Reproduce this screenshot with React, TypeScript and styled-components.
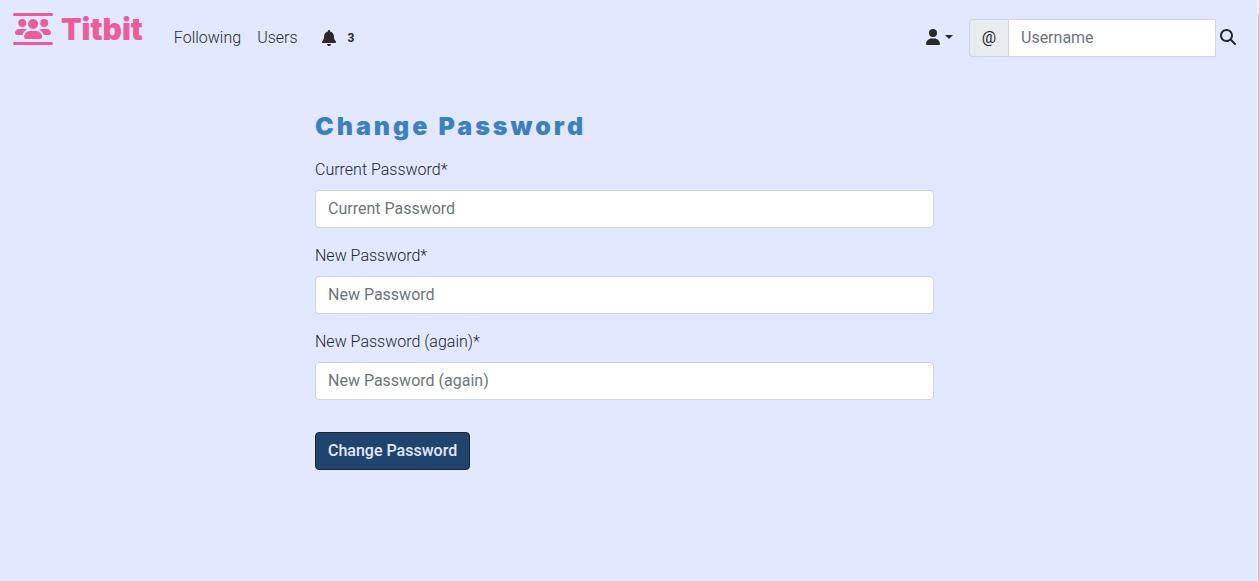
import React from "react";
import styled, { createGlobalStyle } from "styled-components";
import {
  FaBell,
  FaMagnifyingGlass,
  FaUser,
  FaUsersBetweenLines,
} from "react-icons/fa6";

const GlobalStyle = createGlobalStyle`
  *, *::before, *::after { box-sizing: border-box; }
  body {
    margin: 0;
    background: #e2e8ff;
    color: #212529;
    font-family: Roboto, "Liberation Sans", sans-serif;
    font-size: 16px;
    font-weight: 300;
    line-height: 24px;
  }
  input, button { font: inherit; }
`;

const Page = styled.div`
  min-height: 100vh;
  padding-right: 3px;
`;

const ScrollTrack = styled.div`
  position: fixed;
  top: 0;
  right: 0;
  bottom: 0;
  width: 2px;
  padding-top: 14px;
  background: #f1f1f1;
`;

const ScrollThumb = styled.div`
  width: 1px;
  height: 100%;
  margin-left: auto;
  background: #c1c1c1;
`;

const Navbar = styled.header`
  display: flex;
  align-items: center;
  justify-content: space-between;
  padding: 8px 16px 8px 13px;
`;

const NavGroup = styled.nav`
  display: flex;
  align-items: center;
`;

const Brand = styled.a`
  display: flex;
  align-items: center;
  gap: 8px;
  height: 42px;
  margin: 0 23px 18px 0;
  color: #eb5d99;
  font-family: Inter, sans-serif;
  font-size: 30px;
  font-weight: 900;
  line-height: 40px;
  text-decoration: none;
`;

const NavLink = styled.a`
  display: flex;
  align-items: center;
  padding: 8px;
  color: #292929;
  text-decoration: none;
`;

const Notifications = styled(NavLink)`
  gap: 11px;
  margin-left: 7px;
`;

const Count = styled.span`
  font-size: 12px;
  font-weight: 700;
`;

const Tools = styled.div`
  display: flex;
  align-items: center;
`;

const AccountButton = styled.button`
  display: flex;
  align-items: center;
  gap: 4px;
  margin-right: 16px;
  padding: 6px 0 8px;
  border: 0;
  background: none;
  color: #292929;
`;

const Caret = styled.span`
  border-top: 4px solid;
  border-left: 4px solid transparent;
  border-right: 4px solid transparent;
`;

const Search = styled.form`
  display: flex;
  align-items: center;
`;

const Addon = styled.label`
  display: flex;
  align-items: center;
  height: 38px;
  padding: 0 12px;
  border: 1px solid #ced4da;
  border-right: 0;
  border-radius: 4px 0 0 4px;
  background: #e9ecef;
  font-weight: 400;
`;

const Input = styled.input`
  display: block;
  width: 100%;
  height: 38px;
  padding: 5px 12px 7px;
  border: 1px solid #ced4da;
  border-radius: 4px;
  background: #fff;
  color: #495057;
  font-weight: 400;
  &::placeholder { color: #6c757d; opacity: 1; }
`;

const SearchInput = styled(Input)`
  width: 208px;
  border-radius: 0;
`;

const SearchButton = styled.button`
  display: flex;
  padding: 4px 4px 6px;
  border: 0;
  background: none;
  color: #292929;
`;

const Main = styled.main`
  width: 50%;
  margin: 32px auto 0;
  padding: 0 8px 0 1px;
`;

const Title = styled.h1`
  margin: 0 0 14px;
  color: #3d80c0;
  font-family: Inter, sans-serif;
  font-size: 25px;
  font-weight: 900;
  letter-spacing: 3px;
  line-height: 36px;
`;

const Field = styled.div`
  margin-bottom: 16px;
`;

const Label = styled.label`
  display: block;
  margin-bottom: 8px;
`;

const Submit = styled.button`
  height: 38px;
  margin-top: 16px;
  padding: 0 12px;
  border: 1px solid #212529;
  border-radius: 4px;
  background: #20446e;
  color: #e2e8ff;
  font-weight: 500;
`;

const fields = [
  { id: "current", name: "Current Password" },
  { id: "new", name: "New Password" },
  { id: "again", name: "New Password (again)" },
];

export default function App() {
  return (
    <Page>
      <GlobalStyle />
      <Navbar>
        <NavGroup>
          <Brand href="#">
            <FaUsersBetweenLines size={40} />
            Titbit
          </Brand>
          <NavLink href="#">Following</NavLink>
          <NavLink href="#">Users</NavLink>
          <Notifications href="#" aria-label="Notifications">
            <FaBell size={16} />
            <Count>3</Count>
          </Notifications>
        </NavGroup>
        <Tools>
          <AccountButton type="button" aria-label="Account">
            <FaUser size={16} />
            <Caret />
          </AccountButton>
          <Search>
            <Addon htmlFor="username">@</Addon>
            <SearchInput id="username" type="text" placeholder="Username" />
            <SearchButton type="button" aria-label="Search">
              <FaMagnifyingGlass size={16} />
            </SearchButton>
          </Search>
        </Tools>
      </Navbar>
      <Main>
        <Title>Change Password</Title>
        <form>
          {fields.map(({ id, name }) => (
            <Field key={id}>
              <Label htmlFor={id}>{name}*</Label>
              <Input id={id} type="password" placeholder={name} />
            </Field>
          ))}
          <Submit type="button">Change Password</Submit>
        </form>
      </Main>
      <ScrollTrack>
        <ScrollThumb />
      </ScrollTrack>
    </Page>
  );
}
